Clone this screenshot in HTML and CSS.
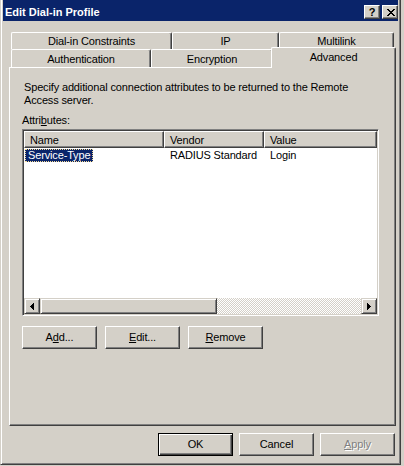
FILE: index.html
```html
<!DOCTYPE html>
<html lang="en">
<head>
    <meta charset="UTF-8">
    <title>Edit Dial-in Profile</title>
    <link rel="stylesheet" href="styles.css">
</head>
<body>
    <div class="window">
        <div class="titlebar">
            <span class="title">Edit Dial-in Profile</span>
            <div class="caption-btns">
                <span class="cap-btn help">?</span>
                <span class="cap-btn close">
                    <svg width="8" height="7" viewBox="0 0 8 7" shape-rendering="crispEdges">
                        <path d="M0 0h2v1H0zM6 0h2v1H6zM1 1h2v1H1zM5 1h2v1H5zM2 2h4v1H2zM3 3h2v1H3zM2 4h4v1H2zM1 5h2v1H1zM5 5h2v1H5zM0 6h2v1H0zM6 6h2v1H6z" fill="#000"/>
                    </svg>
                </span>
            </div>
        </div>

        <div class="dialog">
            <div class="tabs">
                <div class="tab-row back">
                    <div class="tab t-constraints">Dial-in Constraints</div>
                    <div class="tab t-ip">IP</div>
                    <div class="tab t-multilink">Multilink</div>
                </div>
                <div class="tab-row front">
                    <div class="tab t-auth">Authentication</div>
                    <div class="tab t-enc">Encryption</div>
                    <div class="tab t-adv active">Advanced</div>
                </div>
            </div>

            <div class="panel">
                <p class="intro">Specify additional connection attributes to be returned to the Remote<br>Access server.</p>
                <div class="label">Attri<u>b</u>utes:</div>

                <div class="listview">
                    <div class="lv-header">
                        <div class="col c-name">Name</div>
                        <div class="col c-vendor">Vendor</div>
                        <div class="col c-value">Value</div>
                    </div>
                    <div class="lv-body">
                        <div class="lv-row">
                            <div class="cell c-name"><span class="sel">Service-Type</span></div>
                            <div class="cell c-vendor">RADIUS Standard</div>
                            <div class="cell c-value">Login</div>
                        </div>
                    </div>
                    <div class="hscroll">
                        <span class="sb-btn">
                            <svg width="4" height="7" viewBox="0 0 4 7" shape-rendering="crispEdges">
                                <path d="M3 0h1v7H3zM2 1h1v5H2zM1 2h1v3H1zM0 3h1v1H0z" fill="#000"/>
                            </svg>
                        </span>
                        <span class="sb-thumb"></span>
                        <span class="sb-track"></span>
                        <span class="sb-btn">
                            <svg width="4" height="7" viewBox="0 0 4 7" shape-rendering="crispEdges">
                                <path d="M0 0h1v7H0zM1 1h1v5H1zM2 2h1v3H2zM3 3h1v1H3z" fill="#000"/>
                            </svg>
                        </span>
                    </div>
                </div>

                <div class="actions">
                    <button class="btn">A<u>d</u>d...</button>
                    <button class="btn"><u>E</u>dit...</button>
                    <button class="btn"><u>R</u>emove</button>
                </div>
            </div>

            <div class="footer">
                <button class="btn default">OK</button>
                <button class="btn">Cancel</button>
                <button class="btn" disabled><u>A</u>pply</button>
            </div>
        </div>
    </div>
</body>
</html>
```

FILE: styles.css
```css
*, *:before, *:after {
    box-sizing: border-box;
}

body {
    margin: 0;
    background: #d4d0c8;
    font-family: "Liberation Sans", Arial, sans-serif;
    font-size: 11px;
    letter-spacing: -0.15px;
    color: #000;
}

.window {
    width: 401px;
    height: 465px;
    display: flex;
    flex-direction: column;
    padding: 0 2px 2px;
    background: #d4d0c8;
    border: 1px solid;
    border-top: 0;
    border-color: #d4d0c8 #404040 #404040 #d4d0c8;
    box-shadow: inset 1px 0 #fff, inset -1px -1px #808080;
}

/* title bar */

.titlebar {
    height: 21px;
    display: flex;
    align-items: flex-start;
    background: #0a246a;
    color: #fff;
}

.title {
    flex: 1;
    font-weight: bold;
    letter-spacing: 0;
    line-height: 13px;
    padding: 6px 0 0 2px;
}

.caption-btns {
    display: flex;
    gap: 2px;
    padding-top: 5px;
}

.cap-btn {
    width: 16px;
    height: 14px;
    display: flex;
    align-items: center;
    justify-content: center;
    background: #d4d0c8;
    color: #000;
    font-weight: bold;
    font-size: 11px;
    line-height: 1;
    border: 1px solid;
    border-color: #fff #404040 #404040 #fff;
    box-shadow: inset -1px -1px #808080;
}

.cap-btn.close svg {
    margin-left: 1px;
}

/* dialog body */

.dialog {
    flex: 1;
    padding: 11px 0 6px;
}

.tabs {
    margin-left: 8px;
}

.tab-row {
    display: flex;
}

.tab-row.back {
    height: 17px;
}

.tab-row.front {
    height: 18px;
}

.tab {
    height: 100%;
    padding-top: 2px;
    text-align: center;
    line-height: 13px;
    background: #d4d0c8;
    border: 1px solid #fff;
    border-bottom: 0;
    border-right-color: #404040;
    border-radius: 2px 2px 0 0;
    box-shadow: inset -1px 0 #808080;
}

.front .tab {
    padding-top: 3px;
}

.t-constraints { width: 161px; }
.t-ip { width: 107px; }
.t-multilink { width: 115px; }
.t-auth { width: 140px; }
.t-enc { width: 122px; }
.t-adv { width: 121px; }

.tab.active {
    position: relative;
    z-index: 1;
    width: 125px;
    height: 21px;
    margin: -2px -2px 0;
}

.panel {
    height: 359px;
    margin: 0 2px 0 6px;
    padding-left: 12px;
    border: 1px solid;
    border-color: #fff #404040 #404040 #fff;
    box-shadow: inset -1px -1px #808080;
}

.intro {
    margin: 13px 0 0;
    padding-left: 2px;
    line-height: 13px;
}

.label {
    margin-top: 7px;
    line-height: 13px;
}

/* list view */

.listview {
    width: 357px;
    height: 187px;
    margin-top: 2px;
    padding: 1px;
    display: flex;
    flex-direction: column;
    background: #fff;
    border: 1px solid;
    border-color: #808080 #fff #fff #808080;
    box-shadow: inset 1px 1px #404040, inset -1px -1px #d4d0c8;
}

.lv-header {
    height: 17px;
    display: flex;
    background: #d4d0c8;
}

.col {
    padding: 2px 0 0 5px;
    line-height: 13px;
    border: 1px solid;
    border-color: #fff #404040 #404040 #fff;
    box-shadow: inset -1px -1px #808080;
}

.c-name { width: 140px; }
.c-vendor { width: 100px; }
.c-value { flex: 1; }

.lv-body {
    flex: 1;
    background: #fff;
}

.lv-row {
    height: 14px;
    display: flex;
}

.cell {
    padding: 1px 0 0 6px;
    line-height: 13px;
}

.cell.c-name {
    padding-left: 1px;
}

.sel {
    display: inline-block;
    height: 13px;
    padding: 0 2px;
    line-height: 11px;
    background: #0a246a;
    color: #fff;
    border: 1px dotted #f5db95;
}

.hscroll {
    height: 16px;
    display: flex;
    background: #d4d0c8;
}

.sb-btn, .sb-thumb {
    border: 1px solid;
    border-color: #d4d0c8 #404040 #404040 #d4d0c8;
    box-shadow: inset 1px 1px #fff, inset -1px -1px #808080;
    background: #d4d0c8;
}

.sb-btn {
    width: 16px;
    display: flex;
    align-items: center;
    justify-content: center;
}

.sb-thumb {
    width: 177px;
}

.sb-track {
    flex: 1;
    background: repeating-conic-gradient(#fff 0 25%, #d4d0c8 0 50%) 0 0 / 2px 2px;
}

/* buttons */

.actions {
    display: flex;
    gap: 8px;
    margin-top: 10px;
}

.btn {
    width: 75px;
    height: 23px;
    padding: 0 0 1px;
    font: inherit;
    letter-spacing: inherit;
    line-height: 13px;
    color: #000;
    background: #d4d0c8;
    border: 1px solid;
    border-color: #fff #404040 #404040 #fff;
    box-shadow: inset -1px -1px #808080;
}

.btn.default {
    border-color: #000;
    box-shadow: inset 1px 1px #fff, inset -1px -1px #404040, inset -2px -2px #808080;
}

.btn:disabled {
    color: #808080;
    text-shadow: 1px 1px #fff;
}

.footer {
    display: flex;
    justify-content: flex-end;
    gap: 6px;
    margin-top: 7px;
    padding-right: 3px;
}
```
